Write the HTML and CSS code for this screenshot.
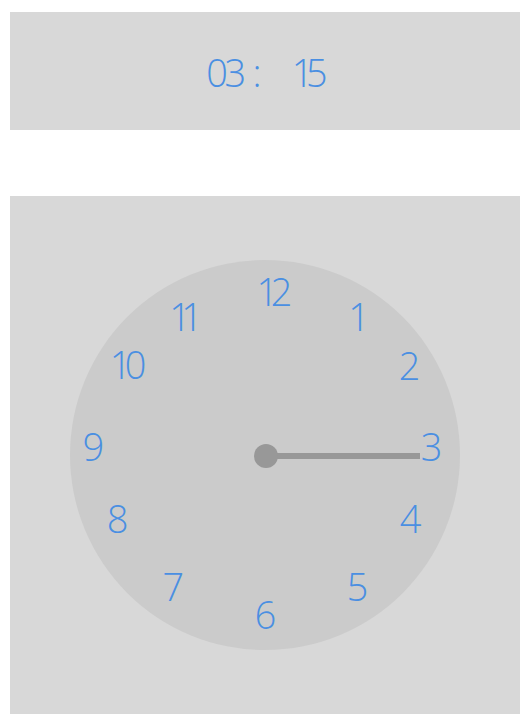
FILE: index.html
```html
<!DOCTYPE html>
<html>
<head>
  <title>Relógio</title>
  <link rel="stylesheet" href="styles.css">
</head>
<body>
  <div class="digital">
    <div class="time">
      <span class="hh">03</span>
      <span class="sep">:</span>
      <span class="mm">15</span>
    </div>
  </div>

  <div class="clock-panel">
    <div class="face">
      <span class="num n12">12</span>
      <span class="num n1">1</span>
      <span class="num n2">2</span>
      <span class="num n3">3</span>
      <span class="num n4">4</span>
      <span class="num n5">5</span>
      <span class="num n6">6</span>
      <span class="num n7">7</span>
      <span class="num n8">8</span>
      <span class="num n9">9</span>
      <span class="num n10">10</span>
      <span class="num n11">11</span>
      <div class="hand"></div>
      <div class="pin"></div>
    </div>
  </div>
</body>
</html>
```

FILE: styles.css
```css
/* Relógio */
body {
  font-family: "Open Sans", Lato, sans-serif;
  margin: 0;
  padding: 12px 10px;
  background-color: #fff;
}

.digital {
  height: 118px;
  display: flex;
  justify-content: center;
  align-items: center;
  background-color: #d8d8d8;
  margin-bottom: 66px;
}

.time {
  display: flex;
  align-items: baseline;
  font-size: 38px;
  font-weight: 300;
  font-variant-numeric: proportional-nums;
  line-height: 1;
  color: #4a8fe2;
  padding-top: 2px;
}

.hh {
  letter-spacing: -3px;
}

.sep {
  margin-left: 10px;
}

.mm {
  margin-left: 33px;
  letter-spacing: -3px;
}

.clock-panel {
  height: 518px;
  display: flex;
  justify-content: center;
  align-items: center;
  background-color: #d8d8d8;
}

.face {
  position: relative;
  width: 390px;
  height: 390px;
  border-radius: 50%;
  background-color: #cbcbcb;
}

.num {
  position: absolute;
  font-size: 38px;
  font-weight: 300;
  font-variant-numeric: proportional-nums;
  letter-spacing: -3px;
  line-height: 1;
  color: #4a8fe2;
  transform: translate(-50%, -50%);
}

.n12 { left: 204px; top: 31px; }
.n1  { left: 287px; top: 56px; }
.n2  { left: 338px; top: 105px; }
.n3  { left: 360px; top: 186px; }
.n4  { left: 339px; top: 258px; }
.n5  { left: 286px; top: 326px; }
.n6  { left: 194px; top: 354px; }
.n7  { left: 102px; top: 326px; }
.n8  { left: 46px;  top: 258px; }
.n9  { left: 22px;  top: 186px; }
.n10 { left: 58px;  top: 104px; }
.n11 { left: 114px; top: 56px; }

.hand {
  position: absolute;
  left: 195px;
  top: 193px;
  width: 155px;
  height: 6px;
  background-color: #989898;
}

.pin {
  position: absolute;
  left: 184px;
  top: 184px;
  width: 24px;
  height: 24px;
  border-radius: 50%;
  background-color: #989898;
}
```
